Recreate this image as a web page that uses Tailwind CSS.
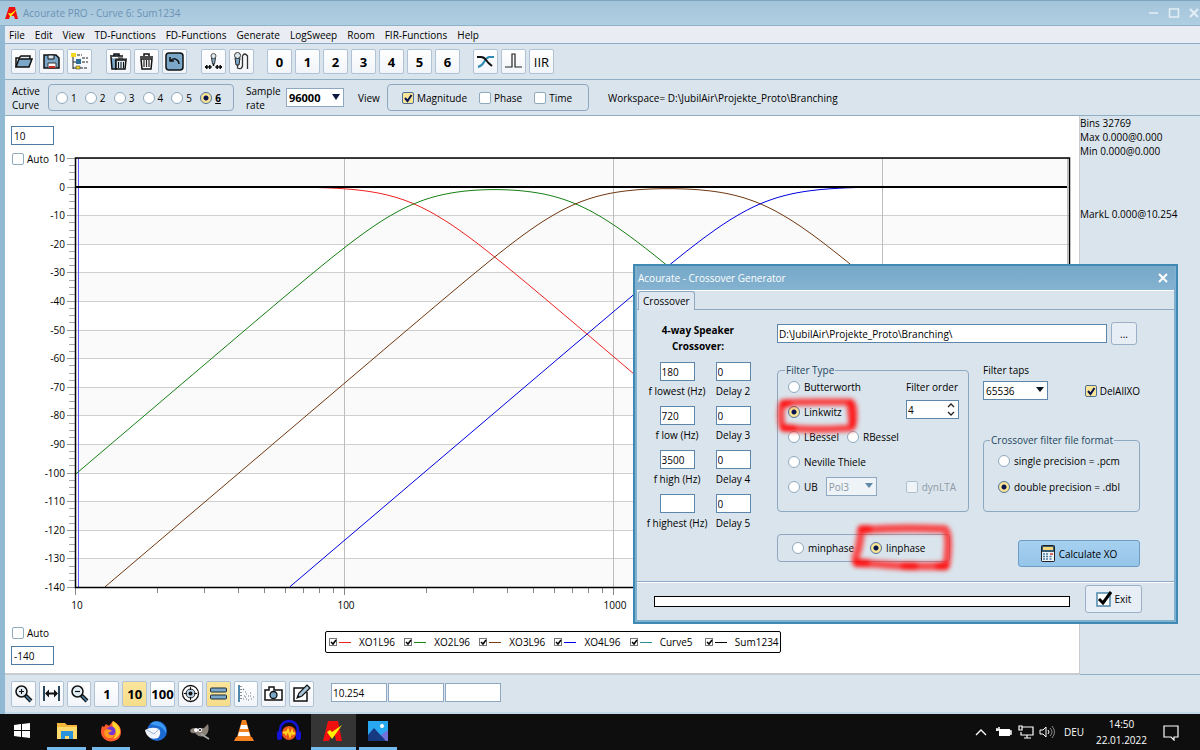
<!DOCTYPE html>
<html lang="en">
<head>
    <meta charset="UTF-8">
    <meta name="viewport" content="width=device-width, initial-scale=1.0">
    <title>Acourate PRO</title>
    <script src="https://cdn.jsdelivr.net/npm/@tailwindcss/browser@4"></script>
</head>
<body class="relative flex flex-col h-screen overflow-hidden bg-[#dae4ec] font-['Open_Sans','Noto_Sans',sans-serif] text-[10px] leading-[14px] text-black
    [&_[type=radio]]:appearance-none [&_[type=radio]]:size-3 [&_[type=radio]]:shrink-0 [&_[type=radio]]:rounded-full [&_[type=radio]]:border [&_[type=radio]]:border-[#8fa9bd] [&_[type=radio]]:bg-white
    [&_[type=radio]:checked]:border-[#4f6f92] [&_[type=radio]:checked]:bg-[radial-gradient(circle,#0a1550_0_2px,#fae696_3px)]
    [&_[type=checkbox]]:appearance-none [&_[type=checkbox]]:size-3 [&_[type=checkbox]]:shrink-0 [&_[type=checkbox]]:rounded-[2px] [&_[type=checkbox]]:border [&_[type=checkbox]]:border-[#8fa9bd] [&_[type=checkbox]]:bg-white
    [&_label]:flex [&_label]:items-center [&_label]:whitespace-nowrap [&_button]:grid [&_button]:place-items-center">

    <!-- title bar -->
    <header class="flex items-center h-[26px] shrink-0 pl-[5px] border-t border-b border-t-[#7da3be] border-b-[#8db3cb] bg-linear-to-b from-[#a4c4db] to-[#afcee1] text-[#6a93b4]">
        <svg class="size-[14px] mr-1" viewBox="0 0 14 14"><path d="M0 13L4 1h6l3 12h-3l-1-3H5l-1 3z" fill="#f01010"/><path d="M3 7l2.500 4L12 3 6 7.500z" fill="#fff200"/></svg>
        <h1>Acourate PRO - Curve 6: Sum1234</h1>
        <div class="ml-auto flex gap-[6px] text-[#e4eef5]">
            <button aria-label="Minimize"><svg class="size-3" viewBox="0 0 12 12"><path d="M1 6h9" stroke="currentColor" stroke-width="1.500"/></svg></button>
            <button aria-label="Maximize" class="ml-[2px]"><svg class="size-3" viewBox="0 0 12 12"><rect x="1.500" y="2" width="9" height="8" fill="none" stroke="currentColor" stroke-width="1.500"/></svg></button>
            <button aria-label="Close" class="ml-[2px]"><svg class="size-3" viewBox="0 0 12 12"><path d="M2 2l8 8M10 2l-8 8" stroke="currentColor" stroke-width="2"/></svg></button>
        </div>
    </header>

    <div class="flex flex-col flex-1 min-h-0 border-l-[5px] border-[#92b9d3]">
        <!-- menu -->
        <nav class="flex items-center gap-[10px] h-[18px] shrink-0 pl-1 bg-[#e9edf3] border-b border-[#8daec5]">
            <a href="#">File</a><a href="#">Edit</a><a href="#">View</a><a href="#">TD-Functions</a><a href="#">FD-Functions</a><a href="#">Generate</a><a href="#">LogSweep</a><a href="#">Room</a><a href="#">FIR-Functions</a><a href="#">Help</a>
        </nav>

        <!-- toolbar -->
        <div class="flex items-center h-9 shrink-0 pl-[6px] border-b border-[#8daec5] [&_button]:size-[25px] [&_button]:rounded-[2px] [&_button]:border [&_button]:border-[#b0c3d6] [&_button]:bg-linear-to-b [&_button]:from-white [&_button]:to-[#f1f4f9] [&_svg]:size-[19px]">
            <div class="flex gap-[3px] mr-[14px]">
                <button aria-label="Open"><svg viewBox="0 0 19 19"><path d="M2 15V6h3l2-2h9v3" fill="#dae8f2" stroke="#111" stroke-width="1.500"/><path d="M2 15l3-8h13l-3 8z" fill="#7ba8c9" stroke="#111" stroke-width="1.500"/></svg></button>
                <button aria-label="Save"><svg viewBox="0 0 19 19"><path d="M2 3h12l3 3v10H2z" fill="#7ba8c9" stroke="#111" stroke-width="1.500"/><path d="M6 3h6v4H6z" fill="#dce8f1" stroke="#111"/><path d="M6 11h8v5H6z" fill="#fff" stroke="#333"/><path d="M7 14h6v2H7z" fill="#c32b20"/></svg></button>
                <button aria-label="Structure"><svg viewBox="0 0 19 19"><path d="M3 4v13M3 10h4M3 16h5" fill="none" stroke="#222"/><path d="M7 3h5M12 6h6M12 10h6M10 16h8" fill="none" stroke="#222" stroke-dasharray="3 1"/><path d="M1 1h5v4H1z" fill="#f4d820"/><rect x="6" y="7" width="5" height="5" fill="#2f6c98"/><path d="M6 14h4v3H6z" fill="#f4d820" stroke="#222" stroke-width=".5"/></svg></button>
            </div>
            <div class="flex gap-[3px] mr-[14px]">
                <button aria-label="Delete all"><svg viewBox="0 0 19 19"><path d="M1 4h13M5 4V2h5v2M2 5l1 12h4V8" fill="#7ba8c9" stroke="#111" stroke-width="1.500"/><path d="M7 8v9h9l1-9z" fill="#d5e4ef" stroke="#111" stroke-width="1.500"/><path d="M5.500 7H18M9 6h5M9.500 10v6M12 10v6M14.500 10v6" stroke="#111"/></svg></button>
                <button aria-label="Delete"><svg viewBox="0 0 19 19"><path d="M3 5h13M7 4V2h5v2M4 7h11l-1 10H5z" fill="#fff" stroke="#111" stroke-width="1.500"/><path d="M7 8v7M9.500 8v7M12 8v7" stroke="#222" stroke-width="1.200"/></svg></button>
                <button aria-label="Undo"><svg viewBox="0 0 19 19"><rect x="1" y="1" width="17" height="17" rx="3" fill="#7ba8c9" stroke="#111" stroke-width="1.500"/><path d="M5 5v4h4M5 9q4-4 7-1 2 1 2 4" fill="none" stroke="#111" stroke-width="1.500"/></svg></button>
            </div>
            <div class="flex gap-[3px] mr-[13px]">
                <button aria-label="Microphone position"><svg viewBox="0 0 19 19"><path d="M7.500 6l1 6h2l1-6z" fill="#7ba8c9" stroke="#333"/><circle cx="9.500" cy="4" r="2.500" fill="#dce8ef" stroke="#555"/><path d="M9.500 12v2M2 15h4M13 15h4" stroke="#111" stroke-width="1.500"/><path d="M1 15l2-2v4zM18 15l-2-2v4zM7.500 15l-2-2v4zM11.500 15l2-2v4z" fill="#111" stroke="#111"/></svg></button>
                <button aria-label="Record"><svg viewBox="0 0 19 19"><path d="M3 6l1 7h3l1-7z" fill="#7ba8c9" stroke="#222"/><circle cx="5.500" cy="3.500" r="3" fill="#dce8ef" stroke="#333"/><path d="M5.500 13v3q4 2 5-2V4q2-4 5 0v13" fill="none" stroke="#333" stroke-width="1.300"/></svg></button>
            </div>
            <div class="flex gap-[3px] mr-[13px] text-[13px] font-bold">
                <button>0</button><button>1</button><button>2</button><button>3</button><button>4</button><button>5</button><button>6</button>
            </div>
            <div class="flex gap-[3px] text-[13px]">
                <button aria-label="Crossover"><svg viewBox="0 0 19 19"><path d="M2 15q4-1 6-5t5-5h5" fill="none" stroke="#2d8bb5" stroke-width="2"/><path d="M1 5h4q3 0 5 3t6 6" fill="none" stroke="#111" stroke-width="2"/></svg></button>
                <button aria-label="Impulse"><svg viewBox="0 0 19 19"><path d="M1 15h7V2h3v13h7" fill="none" stroke="#222" stroke-width="1.200"/></svg></button>
                <button>IIR</button>
            </div>
        </div>

        <!-- curve settings -->
        <div class="flex items-center h-9 shrink-0 pl-[7px] border-b border-[#8daec5]">
            <span class="w-9">Active<br>Curve</span>
            <div class="grid grid-cols-6 items-center w-[186px] h-[27px] pl-[7px] pr-1 rounded-[4px] border border-[#8da8c0] [&_label]:gap-[3px]">
                <label><input type="radio" name="curve">1</label>
                <label><input type="radio" name="curve">2</label>
                <label><input type="radio" name="curve">3</label>
                <label><input type="radio" name="curve">4</label>
                <label><input type="radio" name="curve">5</label>
                <label><input type="radio" name="curve" checked><b class="underline">6</b></label>
            </div>
            <label for="rate" class="ml-3 w-10">Sample<br>rate</label>
            <div class="relative">
                <select id="rate" class="appearance-none w-[58px] h-[19px] pl-[2px] border border-[#8da8c0] bg-white text-[11px] font-bold"><option>96000</option></select>
                <svg class="absolute right-1 top-[6px] w-2 h-[6px] pointer-events-none" viewBox="0 0 8 6"><path d="M0 0h8L4 6z" fill="#0c1740"/></svg>
            </div>
            <span class="ml-[14px] w-[29px]">View</span>
            <div class="flex items-center gap-3 w-[202px] h-[27px] pl-[14px] rounded-[4px] border border-[#8da8c0] [&_label]:gap-[3px]">
                <label class="relative"><input type="checkbox" class="checked:bg-[#fae696]! checked:border-[#4f6f92]!" checked>Magnitude<svg class="absolute left-px top-[2px] size-[10px] pointer-events-none" viewBox="0 0 10 10"><path d="M2 5l2.500 3L8.500 2" fill="none" stroke="#0a1550" stroke-width="2"/></svg></label>
                <label><input type="checkbox">Phase</label>
                <label><input type="checkbox">Time</label>
            </div>
            <span class="ml-[19px] whitespace-nowrap">Workspace= D:\JubilAir\Projekte_Proto\Branching</span>
        </div>

        <!-- chart and readout -->
        <div class="flex flex-1 min-h-0">
            <div class="relative flex flex-col flex-1 min-w-0 bg-white border-r border-b-2 border-[#c8cbd0]">
                <svg id="chart" class="flex-1 min-h-0 w-full" viewBox="5 116 1074 504" preserveAspectRatio="xMinYMin meet" font-size="10"></svg>
                <div class="absolute left-[6px] top-[10px] flex flex-col gap-[6px]">
                    <input type="text" aria-label="Upper limit" value="10" class="w-[43px] h-[19px] px-[2px] border border-[#4f7aa3] bg-white">
                    <label class="gap-[3px] mt-px"><input type="checkbox" class="ml-px">Auto</label>
                </div>
                <div class="flex h-[52px] shrink-0 pl-[6px]">
                    <div class="flex flex-col gap-[6px] pt-[5px] w-[314px]">
                        <label class="gap-[3px]"><input type="checkbox" class="ml-px">Auto</label>
                        <input type="text" aria-label="Lower limit" value="-140" class="w-[43px] h-[19px] px-[2px] border border-[#4f7aa3] bg-white">
                    </div>
                    <div class="grid grid-cols-6 w-[456px] h-[22px] mt-[10px] pl-[3px] border-[1.500px] border-black rounded-[2px] [&_[type=checkbox]]:size-2! [&_[type=checkbox]]:rounded-none! [&_[type=checkbox]]:border-[#777]! [&_label]:relative [&_svg]:w-[22px] [&_svg]:h-2 [&_svg]:absolute [&_svg]:left-0 [&_svg]:pointer-events-none [&_svg]:fill-none [&_span]:ml-[22px]">
                        <label><input type="checkbox" checked><svg viewBox="0 0 22 8"><path d="M2 4l2 2 3-4" stroke="#000" stroke-width="1.500"/><path d="M10 4.500h12" stroke="#e8231c"/></svg><span>XO1L96</span></label>
                        <label><input type="checkbox" checked><svg viewBox="0 0 22 8"><path d="M2 4l2 2 3-4" stroke="#000" stroke-width="1.500"/><path d="M10 4.500h12" stroke="#128a12"/></svg><span>XO2L96</span></label>
                        <label><input type="checkbox" checked><svg viewBox="0 0 22 8"><path d="M2 4l2 2 3-4" stroke="#000" stroke-width="1.500"/><path d="M10 4.500h12" stroke="#7b3c0e"/></svg><span>XO3L96</span></label>
                        <label><input type="checkbox" checked><svg viewBox="0 0 22 8"><path d="M2 4l2 2 3-4" stroke="#000" stroke-width="1.500"/><path d="M10 4.500h12" stroke="#0000e8"/></svg><span>XO4L96</span></label>
                        <label><input type="checkbox" checked><svg viewBox="0 0 22 8"><path d="M2 4l2 2 3-4" stroke="#000" stroke-width="1.500"/><path d="M10 4.500h12" stroke="#2b8d8d"/></svg><span>Curve5</span></label>
                        <label><input type="checkbox" checked><svg viewBox="0 0 22 8"><path d="M2 4l2 2 3-4" stroke="#000" stroke-width="1.500"/><path d="M10 4.500h12" stroke="#000"/></svg><span>Sum1234</span></label>
                    </div>
                </div>
            </div>
            <aside class="w-[120px] shrink-0 border-b border-[#8daec5]">
                <p>Bins 32769</p>
                <p>Max 0.000@0.000</p>
                <p>Min 0.000@0.000</p>
                <p class="mt-[49px]">MarkL 0.000@10.254</p>
            </aside>
        </div>

        <!-- lower toolbar -->
        <div class="flex items-center h-[39px] shrink-0 pl-[6px] border-b-2 border-[#c4d9e8]">
            <div class="grid grid-cols-11 gap-[3px] w-[303px] text-[13px] font-bold [&_button]:h-[26px] [&_button]:rounded-[2px] [&_button]:border [&_button]:border-[#b0c3d6] [&_button]:bg-linear-to-b [&_button]:from-white [&_button]:to-[#f1f4f9] [&_svg]:size-[19px]">
                <button aria-label="Zoom in"><svg viewBox="0 0 19 19"><path d="M11 11l6 6" stroke="#111" stroke-width="4"/><path d="M12 12l5 5" stroke="#4f88ae" stroke-width="1.500"/><circle cx="7.500" cy="7.500" r="5.500" fill="#e4eef5" stroke="#111" stroke-width="1.500"/><path d="M7.500 5v5M5 7.500h5" stroke="#111" stroke-width="1.200"/></svg></button>
                <button aria-label="Fit width"><svg viewBox="0 0 19 19"><path d="M2 2v15M17 2v15" stroke="#2b475c" stroke-width="2"/><path d="M5 9.500h9" stroke="#111" stroke-width="2"/><path d="M3 9.500l4-4v8zM16 9.500l-4-4v8z" fill="#111"/></svg></button>
                <button aria-label="Zoom out"><svg viewBox="0 0 19 19"><path d="M11 11l6 6" stroke="#111" stroke-width="4"/><path d="M12 12l5 5" stroke="#4f88ae" stroke-width="1.500"/><circle cx="7.500" cy="7.500" r="5.500" fill="#e4eef5" stroke="#111" stroke-width="1.500"/><path d="M5 7.500h5" stroke="#111" stroke-width="1.200"/></svg></button>
                <button>1</button>
                <button class="from-[#fbe59b]! to-[#f6dd8b]!">10</button>
                <button>100</button>
                <button aria-label="Center"><svg viewBox="0 0 19 19"><circle cx="9.500" cy="9.500" r="8" fill="#fff" stroke="#111" stroke-width="1.300"/><circle cx="9.500" cy="9.500" r="4.500" fill="#b9d2e3" stroke="#222"/><circle cx="9.500" cy="9.500" r="2" fill="#111"/><path d="M9.500 3v3M9.500 13v3M3 9.500h3M13 9.500h3" stroke="#111"/></svg></button>
                <button aria-label="Bars" class="from-[#fbe59b]! to-[#f6dd8b]!"><svg viewBox="0 0 19 19"><rect x="1.500" y="4" width="16" height="4" rx="1" fill="#7ba8c9" stroke="#182c3d"/><rect x="1.500" y="11" width="16" height="4" rx="1" fill="#7ba8c9" stroke="#182c3d"/></svg></button>
                <button aria-label="Scatter"><svg viewBox="0 0 19 19"><path d="M3 1v17" stroke="#4f88ae" stroke-width="2"/><path d="M5 2v15" stroke="#222" stroke-dasharray="1 2"/><path d="M7 5l1 1M9 8h1M12 12h1M8 12h1M10 15h1M14 9h1M15 15h1M12 16h1M17 13h1M14 12h1M7 15h1M10 10h1M9 13h1" stroke="#667a8a" stroke-width="1.200"/></svg></button>
                <button aria-label="Snapshot"><svg viewBox="0 0 19 19"><path d="M1 6h4V3h5v3h8v10H1z" fill="#fff" stroke="#111" stroke-width="1.500"/><circle cx="9.500" cy="11" r="3.500" fill="#7ba8c9" stroke="#111" stroke-width="1.300"/></svg></button>
                <button aria-label="Edit"><svg viewBox="0 0 19 19"><path d="M12 4H2v13h13V8" fill="#fff" stroke="#111" stroke-width="1.500"/><path d="M5 14l2-5 8-8 3 3-8 8z" fill="#a9c5d9" stroke="#111" stroke-width="1.200"/><path d="M5 14l3-1-2-2z" fill="#111"/></svg></button>
            </div>
            <div class="flex gap-px ml-[17px] -mt-[2px] [&_input]:w-14 [&_input]:h-[19px] [&_input]:px-px [&_input]:border [&_input]:border-[#8da8c0] [&_input]:bg-white">
                <input type="text" aria-label="Cursor frequency" value="10.254">
                <input type="text" aria-label="Cursor value 1">
                <input type="text" aria-label="Cursor value 2">
            </div>
        </div>
    </div>

    <!-- taskbar -->
    <footer class="flex h-9 shrink-0 bg-[#0e0e0e] text-white">
        <div class="grid grid-cols-9 w-[400px] [&_svg]:size-6 [&_button]:border-b-3 [&_button]:border-transparent">
            <button aria-label="Start"><svg viewBox="0 0 24 24"><path d="M4 6l7-1v6H4zM12 5l8-1v7h-8zM4 12h7v6l-7-1zM12 12h8v7l-8-1z" fill="#fff"/></svg></button>
            <button aria-label="Explorer" class="mx-[3px] border-[#76b9ed]!"><svg viewBox="0 0 24 24"><path d="M2 4h8l2 2h10v14H2z" fill="#f5b83d"/><path d="M2 8h20v12H2z" fill="#ffdb6e"/><path d="M6 20v-8h12v8h-4v-3h-4v3z" fill="#2a93dc"/></svg></button>
            <button aria-label="Firefox" class="mx-[3px] border-[#76b9ed]!"><svg viewBox="0 0 24 24"><path d="M3 7l2 1 2-3 3 2 4-5q8 4 8 11t-7 9q-8 2-12-5-2-4 0-10z" fill="#ff5a2a"/><path d="M14 2q8 5 7 12-2 5-7 6 5-5 1-11-3-3-1-7z" fill="#ffd32d"/><circle cx="12" cy="12" r="4.500" fill="#7437d6"/><path d="M6 11q4-2 7 1l-4 2q3 4 8 1-4 6-10 3-3-3-1-7z" fill="#ff9a1f"/></svg></button>
            <button aria-label="Thunderbird"><svg viewBox="0 0 24 24"><circle cx="13" cy="12" r="10" fill="#1b69d1"/><path d="M6 5q5-5 11-1 6 4 5 10-3-6-8-7-4-1-8-2z" fill="#3c9bf0"/><path d="M1 11q7-4 14-1 3 4-1 9-6 2-9-1-3-2-4-7z" fill="#f1f5fb"/><path d="M3 11l7 4 5-5" fill="none" stroke="#9ab5d5"/></svg></button>
            <button aria-label="GIMP"><svg viewBox="0 0 24 24"><path d="M5 9l3 1 8-1 4-4q2 7-2 11-6 4-11-2-4 1-5-2 0-2 3-3z" fill="#8a8278"/><circle cx="8" cy="11" r="2" fill="#fff"/><circle cx="12" cy="11" r="2" fill="#fff"/><circle cx="12" cy="11" r="1" fill="#111"/><path d="M13 15l8 5" stroke="#aaa" stroke-width="1.500"/></svg></button>
            <button aria-label="VLC"><svg viewBox="0 0 24 24"><path d="M10 1h4l5 17H5z" fill="#f58220"/><path d="M9 6h6l1 4H8zM7 13h10l1 4H6z" fill="#fff"/><path d="M4 18h16l2 4H2z" fill="#f58220"/></svg></button>
            <button aria-label="Audacity"><svg viewBox="0 0 24 24"><circle cx="12" cy="14" r="7" fill="#e9551a"/><path d="M6 14l2-1 1 2 2-4 2 6 2-5 1 3 2-1" fill="none" stroke="#ffd21e" stroke-width="2"/><path d="M3 15Q2 3 12 2q10 1 9 13" fill="none" stroke="#1414d8" stroke-width="2.500"/><rect x="0" y="12" width="5" height="9" rx="2" fill="#1414d8"/><rect x="19" y="12" width="5" height="9" rx="2" fill="#1414d8"/></svg></button>
            <button aria-label="Acourate" class="bg-[#353535] border-[#76b9ed]!"><svg viewBox="0 0 24 24"><path d="M2 22L7 2h10l4 20h-6l-1-5h-4l-2 5z" fill="#f01010"/><path d="M6 13l5 7L21 6l-10 7-2-2z" fill="#fff200"/></svg></button>
            <button aria-label="Photos" class="mx-[3px] border-[#76b9ed]!"><svg viewBox="0 0 24 24"><path d="M2 2h20v20H2z" fill="#28a8f0"/><circle cx="16" cy="7" r="2" fill="#fff"/><path d="M15 16l7-5v11h-7z" fill="#7173d9"/><path d="M2 16l6-7 12 13H2z" fill="#153a82"/></svg></button>
        </div>
        <div class="ml-auto flex items-center pr-[21px]">
            <svg class="w-3 h-4 mr-[9px]" viewBox="0 0 12 16"><path d="M1 11l5-5 5 5" fill="none" stroke="#fff" stroke-width="1.300"/></svg>
            <svg class="w-4 h-4 mr-[6px]" viewBox="0 0 16 16"><rect x="3" y="5" width="11" height="7" fill="#fff"/><path d="M14 7h1v3h-1M1 4v3M3 3v3M0 6h5" stroke="#fff" stroke-width="1.500"/></svg>
            <svg class="w-4 h-4 mr-[5px]" viewBox="0 0 16 16"><path d="M4 3h11v8H3V8M9 11v3M6 14h7M1 2h3v4H1z" fill="none" stroke="#fff" stroke-width="1.200"/></svg>
            <svg class="w-4 h-4 mr-[9px]" viewBox="0 0 16 16"><path d="M1 6h3l3-3v10l-3-3H1z" fill="none" stroke="#fff"/><path d="M9 6q2 2 0 4" fill="none" stroke="#fff"/><path d="M11 4q4 4 0 8M13 2q5 6 0 12" fill="none" stroke="#888"/></svg>
            <span class="mr-3">DEU</span>
            <time class="text-center leading-[16px] mr-4">14:50<br>22.01.2022</time>
            <svg class="w-4 h-[17px]" viewBox="0 0 16 17"><path d="M1 2h14v11h-4v3l-3-3H1z" fill="none" stroke="#fff" stroke-width="1.200"/></svg>
        </div>
    </footer>

    <!-- crossover dialog -->
    <section role="dialog" aria-label="Crossover Generator" class="absolute right-[22px] top-[264px] w-[545px] flex flex-col border-2 border-[#3f89b2] bg-[#dae4ec]">
        <div class="flex flex-col border-x-2 border-b-2 border-[#7fb0cf] [&_[type=text]]:bg-white [&_[type=text]]:border [&_[type=text]]:border-[#5d86ac] [&_[type=text]]:h-[19px] [&_[type=text]]:px-px">
            <header class="flex items-center h-6 pl-px bg-linear-to-b from-[#76a8c8] to-[#85b3d1] text-white">
                <h2>Acourate - Crossover Generator</h2>
                <button aria-label="Close dialog" class="ml-auto mr-[6px]"><svg class="size-[10px]" viewBox="0 0 10 10"><path d="M1 1l8 8M9 1l-8 8" stroke="#fff" stroke-width="2"/></svg></button>
            </header>
            <div class="flex h-5 pl-px border-t border-t-white border-b border-b-[#8da8c0]">
                <button class="h-[19px] px-1 rounded-t-[3px] border border-b-0 border-[#8da8c0] bg-[#dfe8f0]">Crossover</button>
            </div>

            <div class="flex gap-[26px] h-[272px] pt-3 pl-2 border-b border-[#8da8c0]">
                <div class="w-[106px] shrink-0">
                    <p class="font-bold text-center leading-[16px] mb-2">4-way Speaker<br>Crossover:</p>
                    <div class="grid grid-cols-[64px_36px] gap-x-[6px] [&_label]:h-[44px] [&_label]:flex-col [&_label]:gap-[3px] [&_input]:w-[35px]">
                        <label><input type="text" value="180">f lowest (Hz)</label>
                        <label><input type="text" value="0">Delay 2</label>
                        <label><input type="text" value="720">f low (Hz)</label>
                        <label><input type="text" value="0">Delay 3</label>
                        <label><input type="text" value="3500">f high (Hz)</label>
                        <label><input type="text" value="0">Delay 4</label>
                        <label><input type="text">f highest (Hz)</label>
                        <label><input type="text" value="0">Delay 5</label>
                    </div>
                </div>

                <div class="flex flex-col w-[363px] shrink-0">
                    <div class="flex items-center gap-1 mb-[18px] pr-[3px]">
                        <input type="text" aria-label="Output folder" value="D:\JubilAir\Projekte_Proto\Branching\" class="flex-1">
                        <button aria-label="Browse" class="w-[26px] h-[23px] rounded-[3px] border border-[#9bb0c6] bg-[#e8eef5]">...</button>
                    </div>
                    <div class="flex gap-[14px] h-[149px]">
                        <fieldset class="relative w-[192px] h-[149px] px-[7px] rounded-[4px] border border-[#8da8c0] [&_label]:gap-1">
                            <legend class="px-px text-[#24465f]">Filter Type</legend>
                            <div class="flex justify-between">
                                <div class="flex flex-col gap-[11px] pl-[3px] pt-[3px]">
                                    <label><input type="radio" name="type">Butterworth</label>
                                    <label><input type="radio" name="type" checked>Linkwitz</label>
                                    <div class="flex gap-2">
                                        <label><input type="radio" name="type">LBessel</label>
                                        <label><input type="radio" name="type">RBessel</label>
                                    </div>
                                    <label><input type="radio" name="type">Neville Thiele</label>
                                </div>
                                <div class="flex flex-col gap-[6px] pt-[3px] pr-[2px]">
                                    <label for="order">Filter order</label>
                                    <div class="relative">
                                        <input type="text" id="order" value="4" class="w-[53px]">
                                        <div class="absolute right-[4px] top-[3px] flex flex-col gap-[3px] w-2">
                                            <button aria-label="Increase"><svg class="w-2 h-[5px]" viewBox="0 0 8 5"><path d="M1 4l3-3 3 3" fill="none" stroke="#222" stroke-width="1.300"/></svg></button>
                                            <button aria-label="Decrease"><svg class="w-2 h-[5px]" viewBox="0 0 8 5"><path d="M1 1l3 3 3-3" fill="none" stroke="#222" stroke-width="1.300"/></svg></button>
                                        </div>
                                    </div>
                                </div>
                            </div>
                            <div class="flex items-center pl-[3px] pt-2">
                                <label><input type="radio" name="type">UB</label>
                                <div class="relative ml-2">
                                    <select aria-label="Polynomial" class="appearance-none w-[51px] h-[19px] pl-[2px] border border-[#8da8c0] bg-[#eef3f7] text-[#8b98a3] opacity-100" disabled><option>Pol3</option></select>
                                    <svg class="absolute right-[4px] top-[6px] w-2 h-[5px] pointer-events-none" viewBox="0 0 8 5"><path d="M0 0h8L4 5z" fill="#5f88a9"/></svg>
                                </div>
                                <label class="ml-auto mr-[5px] text-[#8e9ba6]"><input type="checkbox" disabled class="opacity-60">dynLTA</label>
                            </div>
                            <!-- marker strokes -->
                            <svg class="absolute -left-1 top-[20px] w-[88px] h-[44px] pointer-events-none overflow-visible" viewBox="0 4 88 44" fill="none" stroke="#f22">
                                <g class="blur-[2px]" stroke-linejoin="round" stroke-linecap="round"><path d="M9 10Q25 9 46 9T76 9Q80 10 80 22T77 35Q50 37 30 36T9 35Q7 30 7 22T9 10z" stroke-width="7" opacity=".85"/><path d="M9 11h5M10 35h9M76 11l2 20" stroke-width="7" stroke="#f00" opacity=".7"/></g>
                            </svg>
                        </fieldset>
                        <div class="flex flex-col justify-between flex-1">
                            <div class="grid grid-cols-[1fr_auto] items-center gap-y-1">
                                <label for="taps" class="col-span-2">Filter taps</label>
                                <div class="relative w-[65px]">
                                    <select id="taps" class="appearance-none w-full h-[19px] pl-[2px] border border-[#5d86ac] bg-white"><option>65536</option></select>
                                    <svg class="absolute right-[4px] top-[6px] w-2 h-[5px] pointer-events-none" viewBox="0 0 8 5"><path d="M0 0h8L4 5z" fill="#0a1520"/></svg>
                                </div>
                                <label class="relative gap-[3px]"><input type="checkbox" class="checked:bg-[#fae696]! checked:border-[#4f6f92]!" checked>DelAllXO<svg class="absolute left-px top-[2px] size-[10px] pointer-events-none" viewBox="0 0 10 10"><path d="M2 5l2.500 3L8.500 2" fill="none" stroke="#0a1550" stroke-width="2"/></svg></label>
                            </div>
                            <fieldset class="flex flex-col h-[79px] pl-[14px] rounded-[4px] border border-[#8da8c0] [&_label]:gap-1 [&_label]:mt-[7px] [&_label]:mb-[5px]">
                                <legend class="-ml-2 px-px text-[#24465f]">Crossover filter file format</legend>
                                <label><input type="radio" name="format">single precision = .pcm</label>
                                <label><input type="radio" name="format" checked>double precision = .dbl</label>
                            </fieldset>
                        </div>
                    </div>
                    <div class="relative flex items-start justify-between pt-[22px]">
                        <div class="flex items-center gap-4 w-[173px] h-7 pl-[14px] rounded-[4px] border border-[#8da8c0] [&_label]:gap-1">
                            <label><input type="radio" name="phase">minphase</label>
                            <label><input type="radio" name="phase" checked>linphase</label>
                        </div>
                        <button class="flex! items-center justify-center gap-1 w-[122px] h-[27px] mt-[6px] rounded-[3px] border border-[#6c9dc6] bg-linear-to-b from-[#a6d0ef] to-[#95c5ea]">
                            <svg class="w-[14px] h-[17px]" viewBox="0 0 14 17"><rect x=".5" y=".5" width="13" height="16" rx="1" fill="#355b75" stroke="#222"/><path d="M2 2h10v3H2z" fill="#f6d77b"/><path d="M1 7h12v9H1z" fill="#eef5fa"/><path d="M2 9h2m1 0h2M2 11.500h2m1 0h2M2 14h2m1 0h2M8.500 11.500h2M8.500 14h2" stroke="#457b9e" stroke-width="1.500"/><path d="M9 9h3" stroke="#d13a2d" stroke-width="1.500"/></svg>
                            Calculate XO
                        </button>
                        <svg class="absolute left-[73px] top-[10px] w-[106px] h-[58px] pointer-events-none overflow-visible" viewBox="0 0 106 58" fill="none" stroke="#f22">
                            <g class="blur-[2px]" stroke-linejoin="round" stroke-linecap="round"><path d="M11 8Q50 5 94 7Q99 8 98 27T95 44Q60 45 38 43T7 41Q4 39 7 31T11 8z" stroke-width="8" opacity=".8"/><path d="M12 7h6M7 41h9M89 44h6M55 44h9" stroke-width="8" stroke="#f00" opacity=".7"/></g>
                        </svg>
                    </div>
                </div>
            </div>

            <footer class="flex items-start justify-between h-[38px] pt-[2px] pl-[17px] pr-8 border-t border-white">
                <div role="progressbar" aria-label="Progress" class="w-[416px] h-[11px] mt-[11px] border-[1.500px] border-black bg-white"></div>
                <button class="flex! items-center justify-center gap-[3px] w-[57px] h-[28px] rounded-[3px] border border-[#9bb0c6] bg-[#e8eef5]">
                    <svg class="size-4" viewBox="0 0 16 16"><rect x="1" y="2" width="13" height="13" fill="#fff" stroke="#4b86a9" stroke-width="1.500"/><path d="M3 8l4 4 8-11" fill="none" stroke="#000" stroke-width="3"/></svg>
                    Exit
                </button>
            </footer>
        </div>
    </section>

    <script>
        const chart = document.getElementById('chart');
        const x = f => 76 + 269 * Math.log10(f / 10);
        const y = db => 186.6 - db * 2.86;
        let out = '';

        // alternating bands, grid lines and the dB axis
        for (let db = 10; db >= -140; db -= 10) {
            if (db > -140 && (db / 10) % 2 !== 0) {
                out += `<rect x="76" y="${y(db)}" width="993" height="28.6" fill="#fafafa"/>`;
            }
            const py = Math.round(y(db));
            out += `<path d="M67 ${py}.5H1069" stroke="#cfcfcf"/><path d="M67 ${py}.5h9" stroke="#999"/>`;
            out += `<text x="65" y="${py + 4}" text-anchor="end">${db}</text>`;
            for (let i = 1; i < 4 && db > -140; i++) {
                out += `<path d="M69 ${Math.round(y(db - i * 2.5))}.5h6" stroke="#aaa"/>`;
            }
        }

        // frequency axis
        for (let decade = 10; decade <= 10000; decade *= 10) {
            const px = Math.round(x(decade));
            if (decade > 10) out += `<path d="M${px - .5} 158V587" stroke="#bdbdbd"/>`;
            out += `<path d="M${px - .5} 588v7" stroke="#888"/><text x="${px + 1}" y="609" text-anchor="middle">${decade}</text>`;
            for (let n = 2; n < 10 && decade * n < 48000; n++) {
                out += `<path d="M${Math.round(x(decade * n))}.5 588v5" stroke="#888"/>`;
            }
        }
        out += '<path d="M1067.5 158V587" stroke="#bbb"/><path d="M78.500 158V587" stroke="#5a5aff"/>';

        // Linkwitz-Riley slopes
        const low = (f, fc) => -20 * Math.log10(1 + Math.pow(f / fc, 4));
        const high = (f, fc) => low(fc, f);
        const curves = [
            ['#ee2222', f => low(f, 180)],
            ['#158015', f => high(f, 180) + low(f, 720)],
            ['#703810', f => high(f, 720) + low(f, 3500)],
            ['#0000e0', f => high(f, 3500)]
        ];
        for (const [color, level] of curves) {
            let points = '';
            for (let px = 76; px <= 1067; px += 1) {
                const db = level(10 * Math.pow(10, (px - 76) / 269));
                if (db >= -140) points += `${px},${y(db).toFixed(1)} `;
            }
            out += `<polyline points="${points}" fill="none" stroke="${color}"/>`;
        }
        out += '<path d="M75 187H1067" stroke="#000" stroke-width="2"/>';
        out += '<rect x="75.5" y="158" width="994" height="429.500" fill="none" stroke="#000" stroke-width="1.500"/>';
        chart.innerHTML = out;
    </script>
</body>
</html>
